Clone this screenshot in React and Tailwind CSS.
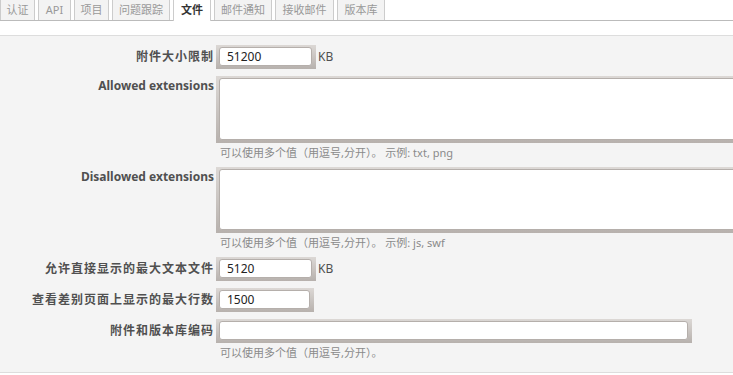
const tabs = [
  { label: "认证", w: "w-[35px]" },
  { label: "API", w: "w-[33px]" },
  { label: "项目", w: "w-[35px]" },
  { label: "问题跟踪", w: "w-[58px]" },
  { label: "文件", w: "w-[38px]", active: true },
  { label: "邮件通知", w: "w-[58px]" },
  { label: "接收邮件", w: "w-[59px]" },
  { label: "版本库", w: "w-[48px]" },
]

function Field({ w, value, h = "h-[24px]" }) {
  return (
    <div className={`${w} ${h} shrink-0 bg-[linear-gradient(to_bottom,#dcd8d5,#b7b1ad)] pt-[2px] pl-[3px] pr-[4px] pb-[3px]`}>
      <div className="h-full rounded-[3px] border border-[#b5afab] bg-white px-[7px] text-[12px] leading-[17px] text-[#222]">
        {value}
      </div>
    </div>
  )
}

function Row({ label, children, top = "pt-[3px]", cjk }) {
  return (
    <div className="flex">
      <div
        className={`w-[216px] shrink-0 pr-[2px] text-right text-[12px] font-bold text-[#505050] ${top} ${
          cjk ? "tracking-[1px]" : ""
        }`}
      >
        {label}
      </div>
      <div className="flex flex-col">{children}</div>
    </div>
  )
}

function Hint({ children }) {
  return <div className="pl-[4px] pt-[2px] text-[11px] leading-[15px] text-[#8a8a8a]">{children}</div>
}

export default function App() {
  return (
    <div className="w-[733px] h-[375px] overflow-hidden bg-white font-['Noto_Sans','Noto_Sans_CJK_SC',sans-serif]">
      {/* Tabs */}
      <div className="flex h-[21px] gap-[3px] border-b border-[#bbb]">
        {tabs.map((t) => (
          <div
            key={t.label}
            className={`${t.w} h-[20px] shrink-0 border-x border-[#ccc] text-center text-[11px] leading-[20px] ${
              t.active ? "h-[21px] bg-white font-bold text-[#333]" : "bg-[#f3f3f3] text-[#999]"
            }`}
          >
            {t.label}
          </div>
        ))}
      </div>

      {/* Settings box */}
      <div className="mt-[14px] flex h-[338px] flex-col gap-[7px] border-y border-[#ddd] bg-[#f4f4f4] pt-[9px]">
        <Row label="附件大小限制" cjk>
          <div className="flex items-start">
            <Field w="w-[100px]" value="51200" />
            <span className="pl-[2px] pt-[3px] text-[12px] text-[#505050]">KB</span>
          </div>
        </Row>

        <Row label="Allowed extensions" top="pt-[1px]">
          <Field w="w-[540px]" h="h-[67px]" value="" />
          <Hint>可以使用多个值（用逗号,分开）。 示例: txt, png</Hint>
        </Row>

        <Row label="Disallowed extensions" top="pt-[1px]">
          <Field w="w-[540px]" h="h-[66px]" value="" />
          <Hint>可以使用多个值（用逗号,分开）。 示例: js, swf</Hint>
        </Row>

        <Row label="允许直接显示的最大文本文件" cjk>
          <div className="flex items-start">
            <Field w="w-[100px]" value="5120" />
            <span className="pl-[2px] pt-[3px] text-[12px] text-[#505050]">KB</span>
          </div>
        </Row>

        <Row label="查看差别页面上显示的最大行数" cjk>
          <Field w="w-[98px]" value="1500" />
        </Row>

        <Row label="附件和版本库编码" cjk>
          <Field w="w-[476px]" value="" />
          <Hint>可以使用多个值（用逗号,分开）。</Hint>
        </Row>
      </div>
    </div>
  )
}
